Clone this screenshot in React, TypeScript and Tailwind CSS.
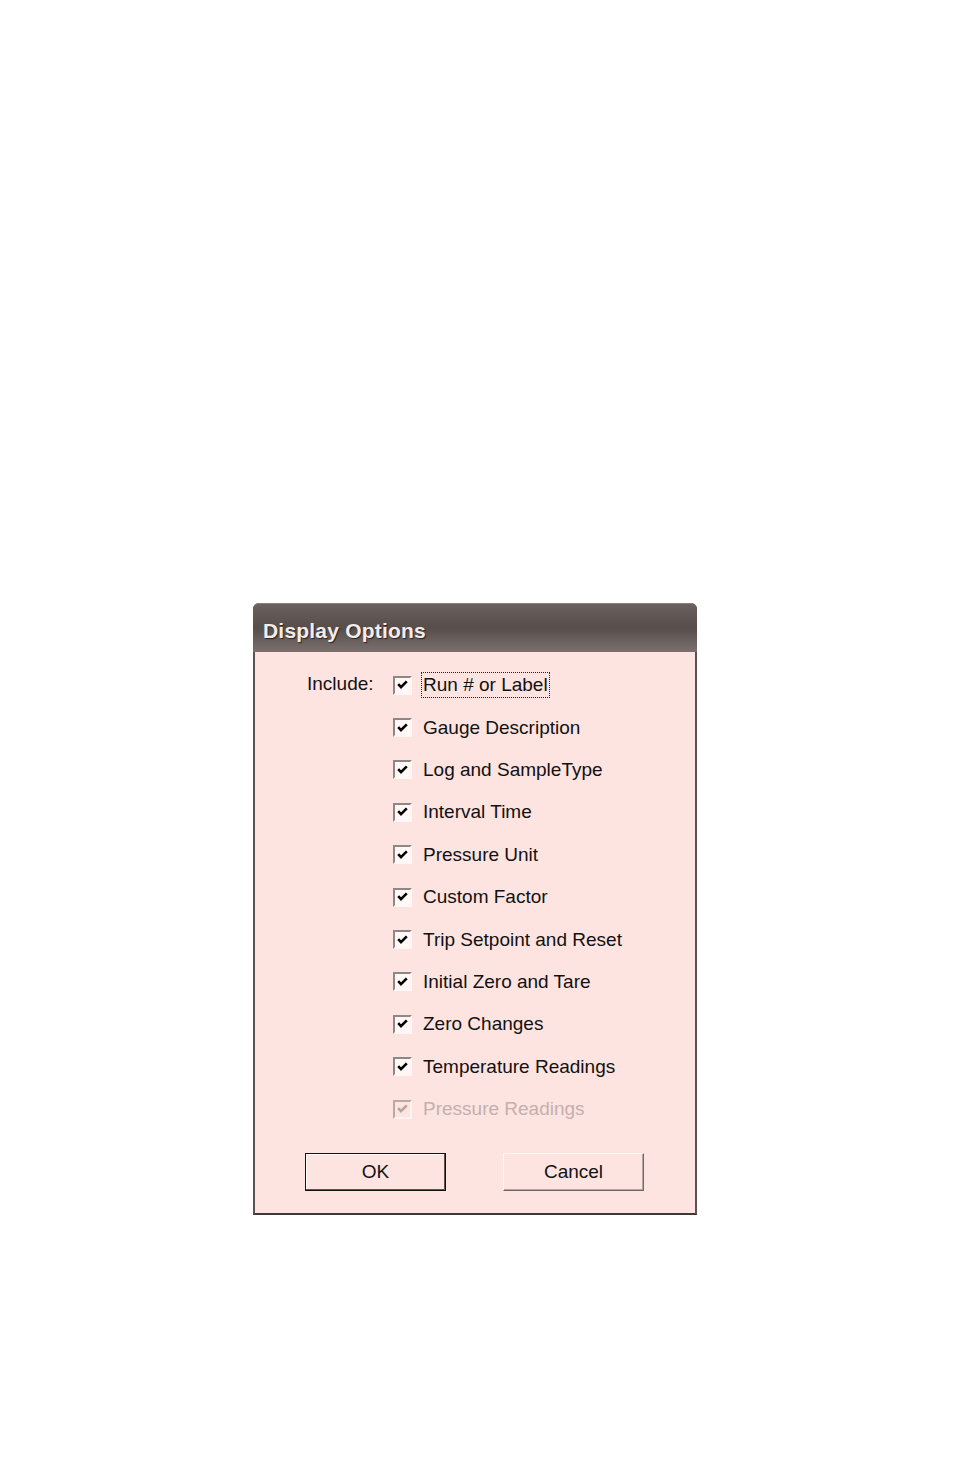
import { useState } from 'react'

const OPTIONS = [
  'Run # or Label',
  'Gauge Description',
  'Log and SampleType',
  'Interval Time',
  'Pressure Unit',
  'Custom Factor',
  'Trip Setpoint and Reset',
  'Initial Zero and Tare',
  'Zero Changes',
  'Temperature Readings',
]

function Check({ disabled }: { disabled?: boolean }) {
  return (
    <span
      className={`flex h-[19px] w-[19px] shrink-0 items-center justify-center border-2 ${
        disabled
          ? 'border-t-[#b9a9a7] border-l-[#b9a9a7] border-b-[#fff3f1] border-r-[#fff3f1] bg-[#fde4e1]'
          : 'border-t-[#8c8886] border-l-[#8c8886] border-b-[#fff6f5] border-r-[#fff6f5] bg-[#fff8f7]'
      }`}
    >
      <svg width="11" height="10" viewBox="0 0 11 10">
        <path
          d="M1.2 4.2 L4 7.2 L9.8 1.4"
          fill="none"
          stroke={disabled ? '#b8a3a1' : '#000'}
          strokeWidth="2.6"
        />
      </svg>
    </span>
  )
}

function App() {
  const [checked] = useState(OPTIONS.map(() => true))

  return (
    <div className="min-h-[1475px] bg-white pl-[253px] pt-[603px] font-['Liberation_Sans',Arial,sans-serif]">
      <div className="w-[444px] rounded-t-[6px] bg-[#5e5553]">
        <div className="flex h-[49px] items-center rounded-t-[6px] border-t border-[#8a7f7c] bg-gradient-to-b from-[#6a605e] via-[#574e4c] to-[#7b706d] pl-[10px] pt-[6px]">
          <span className="text-[21px] font-bold tracking-[0.2px] text-[#f3ecea] [text-shadow:1px_1px_1px_#2a2321]">
            Display Options
          </span>
        </div>
        <div className="border-x-2 border-b-2 border-x-[#5a5250] border-b-[#3e3837] bg-[#fde4e1] pb-[22px]">
          <div className="flex pt-[12px] text-[19px] text-[#111]">
            <div className="w-[138px] pl-[52px] pt-[9px] leading-[22px]">Include:</div>
            <div className="flex flex-col">
              {OPTIONS.map((label, i) => (
                <div key={label} className="flex h-[42.4px] items-center">
                  <Check />
                  <span
                    className={`leading-[22px] ${
                      i === 0 ? 'ml-[9px] border border-dotted border-[#222] px-[1px] py-[1px]' : 'ml-[11px]'
                    }`}
                  >
                    {checked[i] && label}
                  </span>
                </div>
              ))}
              <div className="flex h-[42.4px] items-center">
                <Check disabled />
                <span className="ml-[11px] leading-[22px] text-[#c4b0ae]">Pressure Readings</span>
              </div>
            </div>
          </div>
          <div className="mt-[23px] flex pl-[50px]">
            <button className="h-[38px] w-[141px] border border-[#111] bg-[#fde4e1] text-[19px] text-[#111] shadow-[inset_-1px_-1px_0_#5e5553,inset_1px_1px_0_#fff]">
              OK
            </button>
            <button className="ml-[57px] h-[38px] w-[141px] border border-t-[#fff7f6] border-l-[#fff7f6] border-b-[#6f6765] border-r-[#6f6765] bg-[#fde4e1] text-[19px] text-[#111] shadow-[inset_-1px_-1px_0_#b3a6a4]">
              Cancel
            </button>
          </div>
        </div>
      </div>
    </div>
  )
}

export default App
